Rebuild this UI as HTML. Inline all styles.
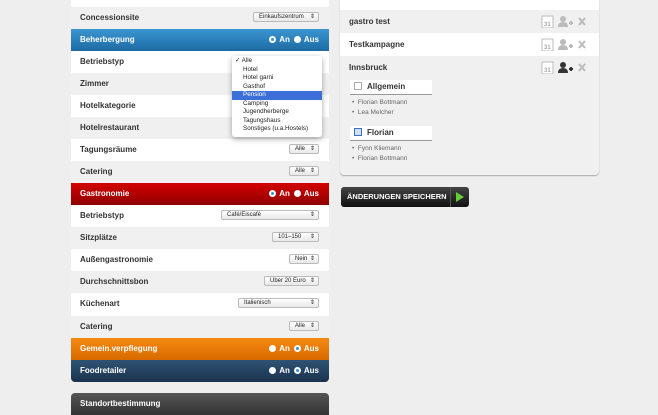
<!DOCTYPE html><html><head><meta charset="utf-8"><style>
body{margin:0;width:658px;height:415px;overflow:hidden;background:#eeeeee;font-family:"Liberation Sans",sans-serif;position:relative}
.p{position:absolute;left:71px;width:258px}
.r{height:22px;line-height:22px;font-size:8px;font-weight:bold;color:#333;padding-left:9px;position:relative;box-sizing:border-box}
.w{background:#fff}.g{background:#f0f0f0}
.h{color:#fff;height:22px;line-height:22px;font-size:8px;font-weight:bold;padding-left:9px;position:relative}
.rad{position:absolute;right:10px;top:0;font-size:8px}
.rad i{display:inline-block;width:7px;height:7px;border-radius:50%;background:#fff;vertical-align:-1px;margin:0 3px 0 4px;box-sizing:border-box}
.rad i.on{border:2px solid #fff;background:#3a8fd6}
.s{position:absolute;right:10px;top:5px;height:10px;border:1px solid #bbb;border-radius:2px;background:linear-gradient(#fff,#e8e8e8);font-size:6px;font-weight:normal;line-height:9px;padding:0 12px 0 5px;color:#222;box-sizing:border-box;white-space:nowrap;overflow:hidden}
.s:after{content:"⇕";position:absolute;right:3px;top:0;font-size:6px}
.rp{position:absolute;left:340px;width:259px}
.rr{height:23px;line-height:23px;font-size:8px;font-weight:bold;color:#333;padding-left:9px;position:relative}
.ic{position:absolute;right:10px;top:5px;width:50px;height:13px}
</style></head><body>
<div class="p" style="top:0">
<div class="r w" style="height:7px"></div>
<div class="r g">Concessionsite<span class="s" style="width:66px">Einkaufszentrum</span></div>
<div class="h" style="background:linear-gradient(#3b96d2,#1d6aa3)">Beherbergung<span class="rad"><i class="on"></i>An<i></i>Aus</span></div>
<div class="r w">Betriebstyp</div>
<div class="r g">Zimmer</div>
<div class="r w">Hotelkategorie</div>
<div class="r g">Hotelrestaurant</div>
<div class="r w">Tagungsräume<span class="s" style="width:30px">Alle</span></div>
<div class="r g">Catering<span class="s" style="width:30px">Alle</span></div>
<div class="h" style="background:linear-gradient(#d40000,#8e0000)">Gastronomie<span class="rad"><i class="on"></i>An<i></i>Aus</span></div>
<div class="r w">Betriebstyp<span class="s" style="width:98px">Café/Eiscafé</span></div>
<div class="r g">Sitzplätze<span class="s" style="width:47px">101–150</span></div>
<div class="r w">Außengastronomie<span class="s" style="width:30px">Nein</span></div>
<div class="r g">Durchschnittsbon<span class="s" style="width:55px">Über 20 Euro</span></div>
<div class="r w" style="height:23px">Küchenart<span class="s" style="width:81px">Italienisch</span></div>
<div class="r g">Catering<span class="s" style="width:30px">Alle</span></div>
<div class="h" style="background:linear-gradient(#f58a10,#d86a00)">Gemein.verpflegung<span class="rad"><i></i>An<i class="on"></i>Aus</span></div>
<div class="h" style="background:linear-gradient(#2f5375,#1a324d);border-radius:0 0 4px 4px">Foodretailer<span class="rad"><i></i>An<i class="on"></i>Aus</span></div>
</div>
<div class="h" style="position:absolute;left:71px;top:393px;width:249px;height:22px;background:linear-gradient(#555,#333);border-radius:4px 4px 0 0">Standortbestimmung</div>
<div style="position:absolute;left:232px;top:56px;width:90px;height:81px;background:#fff;box-shadow:0 2px 6px rgba(0,0,0,.35);border-radius:3px;font-size:6.3px;color:#222;line-height:8.5px;padding-top:1px;box-sizing:border-box">
<div style="padding-left:3px">✓ Alle</div>
<div style="padding-left:11px">Hotel</div><div style="padding-left:11px">Hotel garni</div><div style="padding-left:11px">Gasthof</div>
<div style="padding-left:11px;background:#3d6fd8;color:#fff">Pension</div>
<div style="padding-left:11px">Camping</div><div style="padding-left:11px">Jugendherberge</div><div style="padding-left:11px">Tagungshaus</div><div style="padding-left:11px">Sonstiges (u.a.Hostels)</div>
</div>
<div class="rp" style="top:0;background:#f0f0f0;height:175px;border-radius:0 0 4px 4px;box-shadow:0 1px 1px #aaa">
<div class="rr" style="background:#fff;height:10px"></div>
<div class="rr">gastro test<svg class="ic"><rect x="3" y="1" width="11" height="12" fill="#fff" stroke="#bbb"/><text x="5" y="11" font-size="6" fill="#aaa">31</text><circle cx="24" cy="4" r="3" fill="#bbb"/><path d="M19 12q0-5 5-5t5 5z" fill="#bbb"/><path d="M30 8h4M32 6v4M40 3l6 7M46 3l-6 7" stroke="#bbb" stroke-width="2"/></svg></div>
<div class="rr" style="background:#fff">Testkampagne<svg class="ic"><rect x="3" y="1" width="11" height="12" fill="#fff" stroke="#bbb"/><text x="5" y="11" font-size="6" fill="#aaa">31</text><circle cx="24" cy="4" r="3" fill="#bbb"/><path d="M19 12q0-5 5-5t5 5z" fill="#bbb"/><path d="M30 8h4M32 6v4M40 3l6 7M46 3l-6 7" stroke="#bbb" stroke-width="2"/></svg></div>
<div class="rr">Innsbruck<svg class="ic"><rect x="3" y="1" width="11" height="12" fill="#fff" stroke="#bbb"/><text x="5" y="11" font-size="6" fill="#aaa">31</text><circle cx="24" cy="4" r="3" fill="#333"/><path d="M19 12q0-5 5-5t5 5z" fill="#333"/><path d="M30 8h4M32 6v4" stroke="#333" stroke-width="2"/><path d="M40 3l6 7M46 3l-6 7" stroke="#bbb" stroke-width="2"/></svg></div>
<div style="position:absolute;left:10px;top:80px;width:82px;height:14px;background:#fff;border-bottom:1px solid #999;font-size:8px;font-weight:bold;line-height:14px;color:#333"><span style="display:inline-block;width:6px;height:6px;border:1px solid #aaa;border-radius:1px;margin:0 5px 0 4px;vertical-align:-1px"></span>Allgemein</div>
<div style="position:absolute;left:12px;top:98px;font-size:6.5px;color:#666;line-height:9.5px">• &nbsp;Florian Bottmann<br>• &nbsp;Lea Melcher</div>
<div style="position:absolute;left:10px;top:126px;width:82px;height:14px;background:#fff;border-bottom:1px solid #999;font-size:8px;font-weight:bold;line-height:14px;color:#333"><span style="display:inline-block;width:6px;height:6px;border:1px solid #3a6fc8;background:#cfe0f8;margin:0 5px 0 4px;vertical-align:-1px"></span>Florian</div>
<div style="position:absolute;left:12px;top:144px;font-size:6.5px;color:#666;line-height:9.5px">• &nbsp;Fynn Kliemann<br>• &nbsp;Florian Bottmann</div>
</div>
<div style="position:absolute;left:341px;top:187px;width:128px;height:20px;background:linear-gradient(#444,#111);border-radius:3px;color:#fff;font-size:7.5px;font-weight:bold;line-height:20px;padding-left:6px;box-sizing:border-box">ÄNDERUNGEN SPEICHERN<span style="position:absolute;right:0;top:0;width:18px;height:20px;border-left:1px solid #555"></span><span style="position:absolute;right:5px;top:5px;border-left:8px solid #6c3;border-top:5px solid transparent;border-bottom:5px solid transparent"></span></div>
</body></html>
